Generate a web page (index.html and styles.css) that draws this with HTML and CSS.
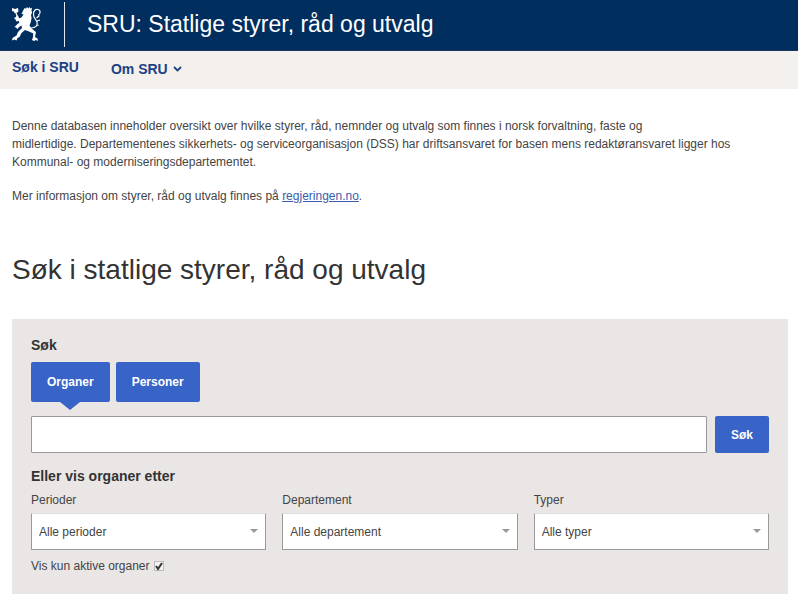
FILE: index.html
```html
<!DOCTYPE html>
<html lang="no">
<head>
<meta charset="utf-8">
<meta name="viewport" content="width=device-width, initial-scale=1">
<title>SRU: Statlige styrer, råd og utvalg</title>
<link rel="stylesheet" href="styles.css">
</head>
<body>
<header class="banner">
  <svg class="crest" viewBox="0 0 30 34" aria-hidden="true">
    <g fill="#fff">
      <path d="M0 1l3 1 3-1 .5 3-1 1.500-3 .5L2 4.500 0 4z"/>
      <path d="M12.500 1l1.500.8L15 0l1.200 1.600L17.500 0l.8 1.600L20 .8l-.5 3 .7 2-1.200 2 .6 3.200-.8 4-1.300 3.500 2 3 4.500 3.500-1 5 2.500 1.500.5 2.500-2-1-2 1-2-1 1-3 .3-3.500-4.300-2-4-1.500-3.500 3-2 4-2 1-1 2.500-2-1-2.500 1 .5-2.500 4-2.500 1.500-3.500 4-4-.5-2.500-2.500 1.500-1.500 2-1.500-1.500-1.500-.5 3-3 3-2-1-1.500-3 1-1-2-1.500-1.500 2-1 .5-2 2 1.500v2l3-1 2-3-2-.8z"/>
    </g>
    <path d="M3.500 5L9 18M19 21c5 0 7-3 6-6-1-3-3.500-4-3.500-7.500S23 2 26 2.500c3 .5 2.500 5 0 5.500M24.500 11l3-2.500M25 14l3-1M24.500 17.500l2 1" fill="none" stroke="#fff" stroke-width="1.200"/>
  </svg>
  <span class="banner-title">SRU: Statlige styrer, råd og utvalg</span>
</header>
<nav class="menu" aria-label="Hovedmeny">
  <a class="menu-link" href="#sok">Søk i SRU</a>
  <button class="menu-button" type="button" aria-expanded="false">Om SRU
    <svg class="chevron" viewBox="0 0 9 6" aria-hidden="true"><path d="M1 1l3.500 3.500L8 1" fill="none" stroke="currentColor" stroke-width="1.800"/></svg>
  </button>
</nav>
<main class="content">
  <div class="intro">
    <p>Denne databasen inneholder oversikt over hvilke styrer, råd, nemnder og utvalg som finnes i norsk forvaltning, faste og<br>midlertidige. Departementenes sikkerhets- og serviceorganisasjon (DSS) har driftsansvaret for basen mens redaktøransvaret ligger hos<br>Kommunal- og moderniseringsdepartementet.</p>
    <p>Mer informasjon om styrer, råd og utvalg finnes på <a href="#regjeringen">regjeringen.no</a>.</p>
  </div>
  <h1>Søk i statlige styrer, råd og utvalg</h1>
  <form class="search" id="sok">
    <label class="search-label" for="query">Søk</label>
    <div class="tabs">
      <button class="button tab tab-active" type="button" aria-pressed="true">Organer</button>
      <button class="button tab" type="button" aria-pressed="false">Personer</button>
    </div>
    <div class="query">
      <input class="field query-input" id="query" type="text">
      <button class="button query-button" type="submit">Søk</button>
    </div>
    <h2>Eller vis organer etter</h2>
    <div class="filters">
      <div class="filter">
        <label for="period">Perioder</label>
        <div class="select"><select class="field" id="period"><option>Alle perioder</option></select></div>
      </div>
      <div class="filter">
        <label for="department">Departement</label>
        <div class="select"><select class="field" id="department"><option>Alle departement</option></select></div>
      </div>
      <div class="filter">
        <label for="type">Typer</label>
        <div class="select"><select class="field" id="type"><option>Alle typer</option></select></div>
      </div>
    </div>
    <div class="active-only">
      <label for="active">Vis kun aktive organer</label>
      <span class="check"><input id="active" type="checkbox" checked><svg viewBox="0 0 10 10" aria-hidden="true"><path d="M2 5l2 3 4-6" fill="none" stroke="#333" stroke-width="2"/></svg></span>
    </div>
  </form>
</main>
</body>
</html>
```

FILE: styles.css
```css
* {
  box-sizing: border-box;
}

body {
  margin: 0;
  background: #fff;
  color: #444;
  font: 12px/18px "Liberation Sans", Arial, sans-serif;
}

button,
input,
select {
  margin: 0;
  font: inherit;
}

.banner {
  display: flex;
  align-items: center;
  min-height: 51px;
  padding: 0 12px 2px;
  background: #002e5f;
  border-bottom: 1px solid #17395f;
}

.crest {
  width: 30px;
  height: 34px;
}

.banner-title {
  margin-left: 22px;
  padding-left: 22px;
  border-left: 1px solid #dfe6ee;
  color: #fff;
  font-size: 23px;
  line-height: 45px;
}

.menu {
  display: flex;
  align-items: flex-start;
  gap: 32px;
  min-height: 38px;
  padding: 7px 12px;
  background: #f3f0ee;
}

.menu-link,
.menu-button {
  color: #1c4284;
  font-size: 14px;
  font-weight: bold;
  line-height: 18px;
  text-decoration: none;
}

.menu-button {
  display: flex;
  align-items: center;
  gap: 5px;
  padding: 2px 0 0;
  border: 0;
  background: none;
}

.chevron {
  width: 9px;
  height: 6px;
}

.content {
  padding: 28px 10px 9px 12px;
}

.intro p {
  margin: 0 0 16px;
}

.intro a {
  color: #3a5cab;
}

h1 {
  margin: 48px 0 32px;
  color: #333;
  font-size: 28px;
  font-weight: normal;
  line-height: 34px;
}

.search {
  padding: 16px 19px 19px;
  background: #e9e6e5;
}

.search-label {
  display: block;
  color: #333;
  font-size: 14px;
  font-weight: bold;
  line-height: 20px;
}

.tabs {
  display: flex;
  gap: 6px;
  margin: 7px 0 14px;
}

.button {
  border: 0;
  border-radius: 2px;
  background: #3864c8;
  color: #fff;
  font-weight: bold;
}

.tab {
  position: relative;
  height: 40px;
  padding: 0 16px;
}

.tab-active::after {
  content: "";
  position: absolute;
  top: 100%;
  left: 50%;
  border: solid transparent;
  border-width: 8px 10px 0;
  border-top-color: #3864c8;
  transform: translateX(-50%);
}

.query {
  display: flex;
  gap: 8px;
}

.field {
  width: 100%;
  height: 37px;
  padding: 0 7px;
  border: 1px solid #999;
  border-radius: 1px;
  background: #fff;
  color: #444;
}

.query-input {
  flex: 1;
  min-width: 0;
}

.query-button {
  padding: 0 16px;
}

h2 {
  margin: 14px 0 6px;
  color: #333;
  font-size: 14px;
  line-height: 18px;
}

.filters {
  display: grid;
  grid-template-columns: repeat(3, 1fr);
  gap: 16px;
}

.filter label {
  display: block;
  margin-bottom: 4px;
}

.select {
  position: relative;
}

.select::after {
  content: "";
  position: absolute;
  top: 16px;
  right: 8px;
  border: solid transparent;
  border-width: 4px 4px 0;
  border-top-color: #999;
  pointer-events: none;
}

.select .field {
  display: block;
  appearance: none;
  border-top-color: #ddd;
}

.active-only {
  display: flex;
  align-items: center;
  gap: 4px;
  margin-top: 7px;
}

.check {
  display: grid;
}

.check > * {
  grid-area: 1 / 1;
  width: 10px;
  height: 10px;
}

.check input {
  appearance: none;
  border: 1px solid #bbb;
  background: #f4f4f4;
}

.check svg {
  pointer-events: none;
  visibility: hidden;
}

.check input:checked + svg {
  visibility: visible;
}
```
